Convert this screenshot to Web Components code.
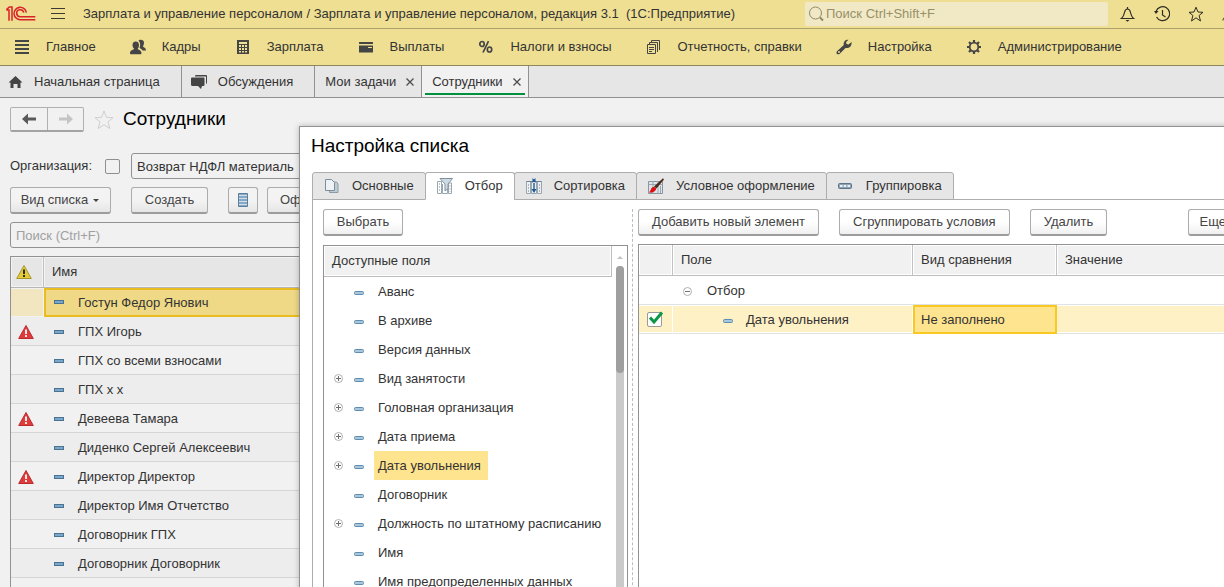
<!DOCTYPE html>
<html lang="ru">
<head>
<meta charset="utf-8">
<meta name="viewport" content="width=device-width, initial-scale=1">
<title>Зарплата и управление персоналом</title>
<style>
html, body { margin: 0; height: 100%; }
body { font: 13px/16px "Liberation Sans", Arial, sans-serif; color: #333; overflow: hidden; }
</style>
</head>
<body>
<hr-app></hr-app>
<script>
const BASE = `*, *::before, *::after { box-sizing: border-box; }
button, input { font: inherit; color: inherit; margin: 0; }
button { cursor: pointer; }
table { border-collapse: separate; border-spacing: 0; table-layout: fixed; width: 100%; }
th, td { padding: 0; text-align: left; font-weight: normal; white-space: nowrap; }`;

function define(name, css, html) {
  const tpl = document.createElement('template');
  tpl.innerHTML = `<style>${BASE}${css}</style>`;
  customElements.define(name, class extends HTMLElement {
    constructor() {
      super();
      const root = this.attachShadow({ mode: 'open' });
      root.append(tpl.content.cloneNode(true));
      const body = document.createElement('template');
      body.innerHTML = typeof html === 'function' ? html(this) : html;
      root.append(body.content);
    }
  });
}

/* name: [width, height, markup] */
const ICONS = {
  logo: [30, 16, `<g transform="scale(.3333)" fill="none" stroke="#d8232a" stroke-width="4.600"><path d="M1 12h8v32M1 11l9-8h8v41"/><path d="M61 20A18.500 18.500 0 1 0 43 41H88M53 20A10.500 10.500 0 1 0 43 32H88"/></g>`],
  menu: [16, 14, `<path d="M1 1.500h14M1 6.500h14M1 11.500h14" stroke="#3c3a33" fill="none"/>`],
  search: [16, 16, `<circle cx="7.500" cy="7" r="6" fill="none" stroke="#8f8968"/><path d="M12 11.500l3 3" stroke="#8f8968" stroke-width="2"/>`],
  bell: [16, 16, `<path d="M7.500 1v2M1.500 12.500C3.500 11 4 9 4.500 6.500 5 4 6 3 7.500 3S10 4 10.500 6.500C11 9 11.500 11 13.500 12.500z" fill="none" stroke="#2f2d25" stroke-width="1.200"/><path d="M5.500 14h4l-2 1.800z" fill="#2f2d25"/>`],
  history: [16, 16, `<path d="M2 5.500A7 7 0 1 1 2.500 11" fill="none" stroke="#2f2d25" stroke-width="1.200"/><path d="M0 5h4.500L2 8z" fill="#2f2d25"/><path d="M8.500 4v5l3 2" fill="none" stroke="#2f2d25" stroke-width="1.200"/>`],
  star: [16, 16, `<path d="M8 1.200l2 4.800 5 .3-3.900 3.200L12.500 15 8 11.800 3.500 15l1.400-5.500L1 6.300 6 6z" fill="none" stroke="#2f2d25"/>`],
  favorite: [20, 20, `<path d="M10 1l2.500 6.300 6.500.4-5 4.200 1.800 6.600L10 14.700l-5.800 3.800L6 11.900 1 7.700l6.500-.4z" fill="none" stroke="#cfcfcf"/>`],
  person: [16, 16, `<path d="M1 14.500c0-3 2-4 6-4M4 4a4 4 0 0 1 8 0c0 4-2 6-4 6s-4-2-4-6z" fill="none" stroke="#2f2d25"/>`],
  lines: [16, 16, `<path d="M1 2h14M1 6h14M1 10h14M1 14h14" stroke="#454545" stroke-width="2"/>`],
  people: [16, 16, `<g fill="#454545"><path d="M8.500 2C9 .3 14 0 14 3.500c0 2-.5 3-1 3.600-.3 1.200 3 1.400 3 4.400h-3.500C12 10 10 9.500 9.500 8.700 10.500 7 10.500 3 8.500 2z"/><path d="M2.500 6C2.500 3.500 4 2.500 5.700 2.500S9 3.500 9 6c0 1.500-.5 2.900-1.200 3.500-.2 1.500 3.700 1.300 3.700 4.500 0 1-.5 1.300-1 1.300H1c-.7 0-1-.4-1-1.300 0-3.200 4.200-3 4-4.500C3 8.900 2.500 7.500 2.500 6z"/></g>`],
  calc: [16, 16, `<path d="M2 1h12v14H2z" fill="#454545"/><path d="M4 3h8v2H4zM4 6h2v2H4zM7 6h2v2H7zM10 6h2v2h-2zM4 9h2v2H4zM7 9h2v2H7zM10 9h2v2h-2zM4 12h2v1.500H4zM7 12h2v1.500H7zM10 12h2v1.500h-2z" fill="#efdf93"/>`],
  card: [16, 16, `<path d="M1.500 3h13q.5 0 .5.500V5H1V3.500Q1 3 1.500 3zM1 6.500h14V13q0 .5-.5.500h-13Q1 13.500 1 13z" fill="#454545"/><path d="M10 8.500h4" stroke="#efdf93"/>`],
  percent: [16, 16, `<g fill="none" stroke="#454545" stroke-width="1.700"><ellipse cx="4" cy="5" rx="2.200" ry="2.500"/><ellipse cx="11.500" cy="10.500" rx="2.200" ry="2.500"/><path d="M10.500 2.200l-5.500 11.300"/></g>`],
  docs: [16, 16, `<path d="M5.500 3V1.500h8V11M3.500 5V3.500h8V13M1.500 5.500h8v9h-8z" fill="none" stroke="#454545"/><path d="M3 8.500h5M3 10.500h5M3 12.500h3" stroke="#454545"/>`],
  wrench: [16, 16, `<path d="M15.500 3l-3 2.500-2-.5-.4-2L12.500.8C9.500 0 7 2.500 7.800 6L1 12.300c-1.500 2 .6 4 2.500 2.600L9.500 9c4 .6 6.500-2 6-6z" fill="#454545"/><circle cx="3" cy="13" r="1" fill="#efdf93"/>`],
  gear: [16, 16, `<circle cx="8" cy="8" r="4.300" fill="none" stroke="#454545" stroke-width="1.800"/><path d="M8 1v3M8 12v3M1 8h3M12 8h3M3 3l2.200 2.200M10.800 10.800L13 13M13 3l-2.200 2.200M5.200 10.800L3 13" stroke="#454545" stroke-width="2.200"/>`],
  home: [16, 16, `<path d="M7.500 2l7 6.500h-2V14H9.500v-4h-4v4H2.500V8.500h-2z" fill="#454545"/>`],
  chat: [18, 16, `<path d="M5 2.500V2q0-1 1-1h10q1 0 1 1v6q0 2-1 2V2.500z" fill="#454545"/><path d="M2 3.500h11.500q1 0 1 1v6q0 1.500-1 1.500H12l-1 3-3-3H2.500q-1.500 0-1.500-1.500v-6q0-1 1-1z" fill="#454545"/>`],
  close: [10, 10, `<path d="M1.500 1.500l7 7M8.500 1.500l-7 7" stroke="#4d4d4d" stroke-width="1.300"/>`],
  back: [16, 12, `<path d="M1 6l6-5.500v4h8v3H7v4z" fill="#595959"/>`],
  forward: [16, 12, `<path d="M15 6L9 .5v4H1v3h8v4z" fill="#c4c4c4"/>`],
  caret: [8, 6, `<path d="M1 2h6L4 5z" fill="#444"/>`],
  list: [12, 16, `<path d="M1.500 1.500h9v13h-9z" fill="#86a8c2" stroke="#5d7f9b"/><path d="M2 3.500h8M2 6.500h8M2 9.500h8M2 12.500h8" stroke="#cfe0ee"/>`],
  dash: [10, 6, `<rect x=".5" y=".5" width="9" height="3" fill="#78a7cb" stroke="#4b7390"/>`],
  field: [10, 6, `<rect x=".5" y="1.500" width="9" height="3" rx="1" fill="#a6c7dc" stroke="#5f8bad"/>`],
  warn: [16, 16, `<path d="M8 1.500L15.300 14.500H.7z" fill="#e2cb37" stroke="#a8962d" stroke-linejoin="round"/><path d="M7 5.500h2v4.500H7zM7 11h2v2H7z" fill="#2f2b12"/>`],
  error: [16, 16, `<path d="M8 1.500L15.300 14.500H.7z" fill="#e03a3a" stroke="#b92b2f" stroke-linejoin="round"/><path d="M7 5.500h2v4.500H7zM7 11h2v2H7z" fill="#f7e9e9"/>`],
  plus: [9, 9, `<circle cx="4.500" cy="4.500" r="4" fill="#fff" stroke="#b0b0b0"/><path d="M2 4.500h5M4.500 2v5" stroke="#6d6d6d"/>`],
  minus: [9, 9, `<circle cx="4.500" cy="4.500" r="4" fill="#fff" stroke="#b0b0b0"/><path d="M2 4.500h5" stroke="#777"/>`],
  tabPages: [16, 16, `<path d="M5.500 4h7l1.500 2v8.500H5.500z" fill="#bfcbd3" stroke="#8b9aa6"/><path d="M1.500 1.500h6l3 3v8h-9z" fill="#eef2f5" stroke="#7d8d9a"/>`],
  tabFilter: [16, 16, `<path d="M.5 3.500h4v12h-4zM5.500 6v9.500h5V6M11.500 5h3v10.500h-3z" fill="#fff" stroke="#9aa7b1"/><path d="M2.500 5v9M13 7v7" stroke="#b9c4cc" stroke-dasharray="2 1"/><path d="M3 .5h12.500L11 6v4.500l-3 2.500V6z" fill="#cfdbe4" stroke="#7f919f"/>`],
  tabSort: [16, 16, `<path d="M.5 3.500h4v12h-4zM5.500 3.500h5v12h-5zM11.500 3.500h4v12h-4z" fill="#eef1f4" stroke="#98a6b1"/><path d="M.5 3.500h15" stroke="#6f8190"/><path d="M2.500 6v9M13.500 6v9" stroke="#a9b6c0" stroke-dasharray="2 1"/><path d="M8 5v8" stroke="#1e5793" stroke-width="1.400"/><path d="M5.500 11h5L8 15zM6.500 0l1.500 1.500L9.500 0v5L8 3.500 6.500 5z" fill="#1e5793"/>`],
  tabFormat: [16, 16, `<path d="M.5 3.500h14v12H.5z" fill="#dfe4e8" stroke="#8796a2"/><path d="M.5 6.500h14M5 3.500v12M10 3.500v12M12.500 8v7" stroke="#9aa7b1"/><path d="M6 8.500L15 .3 16 1.500 8.500 10.500z" fill="#4a2c1d"/><path d="M5.500 9c2 0 3 1 2.500 2.500C7 14 4 15 1 14.500 3 13 2.500 9.500 5.500 9z" fill="#df0d14"/>`],
  tabGroup: [16, 8, `<rect x=".5" y="1.500" width="13" height="5" rx="1" fill="#8ea2b2" stroke="#5c7488"/><path d="M2 4h2.500M5.700 4h2.500M9.500 4H12" stroke="#eaf1f6" stroke-width="2"/>`],
  up: [8, 6, `<path d="M1 5h6L4 2z" fill="#c2c2c2"/>`],
  check: [16, 14, `<path d="M2 6.500L6 11 14 1.500" fill="none" stroke="#0c9648" stroke-width="3"/>`]
};

define('ui-icon', `:host { display: inline-flex; flex: none; } svg { display: block; }`, el => {
  const [w, h, body] = ICONS[el.getAttribute('name')];
  return `<svg width="${w}" height="${h}" viewBox="0 0 ${w} ${h}" aria-hidden="true">${body}</svg>`;
});

define('ui-button', `
:host { display: inline-block; flex: none; }
button { display: flex; align-items: center; justify-content: center; gap: 4px; width: 100%; height: 27px; padding: 0 var(--button-pad, 13px); border: 1px solid #acacac; border-bottom: 2px solid #9c9c9c; border-radius: 3px; background: var(--button-face, linear-gradient(#fff 50%, #f0f0f0)); color: #444; white-space: nowrap; }`,
`<button type="button"><slot></slot></button>`);

define('title-bar', `
:host { display: flex; align-items: center; height: 29px; padding-left: 6px; background: #efdf93; border-bottom: 1px solid #aca06b; overflow: hidden; }
.menu { display: flex; border: 0; padding: 0; background: none; margin: 0 17px 0 14px; }
.name { white-space: pre; }
.tools { display: flex; align-items: center; margin: 0 -14px 0 auto; gap: 18px; }
.search { display: flex; align-items: center; gap: 2px; width: 303px; height: 24px; padding: 0 3px; background: #f1e9c6; border-radius: 2px; margin-right: -6px; }
.search input { flex: 1; min-width: 0; border: 0; padding: 0; background: none; outline: 0; }
.search input::placeholder { color: #979068; opacity: 1; }
.tools button { display: flex; border: 0; padding: 0; background: none; }`,
`<ui-icon name="logo"></ui-icon>
<button class="menu" aria-label="Меню"><ui-icon name="menu"></ui-icon></button>
<span class="name">Зарплата и управление персоналом / Зарплата и управление персоналом, редакция 3.1  (1С:Предприятие)</span>
<div class="tools">
<label class="search"><ui-icon name="search"></ui-icon><input type="text" placeholder="Поиск Ctrl+Shift+F"></label>
<button aria-label="Оповещения"><ui-icon name="bell"></ui-icon></button>
<button aria-label="История"><ui-icon name="history"></ui-icon></button>
<button aria-label="Избранное"><ui-icon name="star"></ui-icon></button>
<button aria-label="Пользователь"><ui-icon name="person"></ui-icon></button>
</div>`);

define('nav-item', `
:host { display: block; flex: none; }
a { display: flex; align-items: center; gap: 16px; color: inherit; text-decoration: none; white-space: nowrap; }`,
el => `<a href="#"><ui-icon name="${el.getAttribute('icon')}"></ui-icon><slot></slot></a>`);

define('section-nav', `
:host { display: block; background: #efdf93; border-bottom: 1px solid #8f875c; }
nav { display: flex; align-items: center; gap: 34px; height: 36px; padding-left: 14px; }`,
`<nav>
<nav-item icon="lines">Главное</nav-item><nav-item icon="people">Кадры</nav-item><nav-item icon="calc">Зарплата</nav-item><nav-item icon="card">Выплаты</nav-item><nav-item icon="percent">Налоги и взносы</nav-item><nav-item icon="docs">Отчетность, справки</nav-item><nav-item icon="wrench">Настройка</nav-item><nav-item icon="gear">Администрирование</nav-item>
</nav>`);

define('window-tab', `
:host { display: flex; align-items: center; flex: none; height: 31px; padding: 0 8px; border-right: 1px solid #919191; position: relative; }
:host([icon]) { padding-right: 21px; }
:host([closable]) { padding-left: 10px; padding-right: 6px; }
:host([active]) { background: #f1f1f1; }
:host([active])::after { content: ""; position: absolute; left: 3px; right: 3px; bottom: 2px; height: 2px; background: #00913f; }
a { display: flex; align-items: center; gap: 10px; color: inherit; text-decoration: none; white-space: nowrap; }
button { display: flex; border: 0; background: none; padding: 0; margin-left: 9px; }`,
el => `<a href="#">${el.hasAttribute('icon') ? `<ui-icon name="${el.getAttribute('icon')}"></ui-icon>` : ''}<slot></slot></a>${el.hasAttribute('closable') ? '<button aria-label="Закрыть"><ui-icon name="close"></ui-icon></button>' : ''}`);

define('window-tabs', `:host { display: flex; background: #e6e6e6; border-bottom: 1px solid #919191; }`,
`<window-tab icon="home">Начальная страница</window-tab><window-tab icon="chat">Обсуждения</window-tab><window-tab closable>Мои задачи</window-tab><window-tab closable active>Сотрудники</window-tab>`);

const PEOPLE = [['Гостун Федор Янович'], ['ГПХ Игорь', 1], ['ГПХ со всеми взносами'], ['ГПХ х х'], ['Девеева Тамара', 1], ['Диденко Сергей Алексеевич'], ['Директор Директор', 1], ['Директор Имя Отчетство'], ['Договорник ГПХ'], ['Договорник Договорник']];

define('employee-table', `
:host { display: block; border: 1px solid #919191; border-width: 1px 0 0 1px; overflow: hidden; }
.flag { width: 33px; }
th { height: 31px; background: #e6e6e6; border-right: 1px solid #c2c2c2; border-bottom: 1px solid #b5b5b5; box-shadow: inset 0 0 0 1px #f3f3f3; padding-left: 8px; }
th:first-child { padding-left: 5px; }
th ui-icon, td ui-icon { vertical-align: middle; }
td { height: 29px; border-bottom: 1px solid #d5d5d5; padding-top: 2px; }
td:first-child { padding-left: 7px; }
td:last-child { padding-left: 10px; }
td:last-child ui-icon { margin-right: 14px; }
tr:nth-child(even) td { background: #ededed; }
tr.current td { padding-top: 0; }
tr.current td:first-child { background: #f1e6bf; border: 1px solid #f1f1f1; border-left: 0; }
tr.current td:last-child { background: #efd986; border: 2px solid #e9bd20; padding-left: 8px; }`,
`<table><colgroup><col class="flag"><col></colgroup>
<thead><tr><th aria-label="Предупреждение"><ui-icon name="warn"></ui-icon></th><th>Имя</th></tr></thead>
<tbody>${PEOPLE.map(([n, e], i) => `<tr${i ? '' : ' class="current"'}><td>${e ? '<ui-icon name="error"></ui-icon>' : ''}</td><td><ui-icon name="dash"></ui-icon>${n}</td></tr>`).join('')}</tbody></table>`);

define('employee-page', `
:host { display: flex; flex-direction: column; height: 100%; padding: 9px 0 0 10px; --button-face: linear-gradient(#f3f3f3 50%, #e6e6e6); --button-pad: 12px; }
.head, .org, .bar { display: flex; align-items: center; }
.head { height: 25px; gap: 10px; }
.history { display: flex; height: 25px; border: 1px solid #b0b0b0; border-bottom: 2px solid #a3a3a3; border-radius: 2px; }
.history button { display: flex; align-items: center; justify-content: center; width: 36px; padding: 0; border: 0; background: none; }
.history button + button { border-left: 1px solid #b0b0b0; }
.fav { display: flex; border: 0; background: none; padding: 0; }
h1 { margin: 0 0 2px -1px; font-size: 19px; line-height: 24px; font-weight: normal; color: #000; }
.org { margin-top: 21px; }
.org label { width: 95px; }
.org input[type=checkbox] { appearance: none; width: 15px; height: 15px; border: 1px solid #8f8f8f; border-radius: 2px; margin-right: 11px; }
input[type=text], input[type=search] { height: 26px; border: 1px solid #919191; border-radius: 3px; background: #f1f1f1; padding: 0 5px; outline: 0; }
.org input[type=text] { flex: 1; }
.bar { margin-top: 8px; gap: 9px; }
.bar .view, .bar .create { margin-right: 11px; }
.view { width: 101px; } .create { width: 77px; } .rows { width: 30px; }
.find { width: 100%; margin-top: 8px; }
.find::placeholder { color: #a0a0a0; opacity: 1; }
employee-table { flex: 1; min-height: 0; margin-top: 8px; }`,
`<div class="head"><div class="history"><button aria-label="Назад"><ui-icon name="back"></ui-icon></button><button aria-label="Вперед"><ui-icon name="forward"></ui-icon></button></div>
<button class="fav" aria-label="В избранное"><ui-icon name="favorite"></ui-icon></button><h1>Сотрудники</h1></div>
<div class="org"><label for="org-on">Организация:</label><input id="org-on" type="checkbox"><input type="text" aria-label="Организация" value="Возврат НДФЛ материаль"></div>
<div class="bar"><ui-button class="view">Вид списка <ui-icon name="caret"></ui-icon></ui-button><ui-button class="create">Создать</ui-button><ui-button class="rows"><ui-icon name="list"></ui-icon></ui-button><ui-button>Оф</ui-button></div>
<input class="find" type="search" aria-label="Поиск" placeholder="Поиск (Ctrl+F)">
<employee-table></employee-table>`);

define('form-tab', `
:host { display: block; flex: none; margin-left: -1px; }
button { display: flex; align-items: center; gap: 12px; height: 28px; padding: 0 11px; border: 1px solid #adadad; border-radius: 3px 3px 0 0; background: #e6e6e6; color: #333; white-space: nowrap; }
:host([active]) button { background: #fff; border-bottom-color: #fff; }`,
el => `<button type="button" role="tab"><ui-icon name="${el.getAttribute('icon')}"></ui-icon><slot></slot></button>`);

const FIELDS = [['Аванс'], ['В архиве'], ['Версия данных'], ['Вид занятости', 1], ['Головная организация', 1], ['Дата приема', 1], ['Дата увольнения', 1, 1], ['Договорник'], ['Должность по штатному расписанию', 1], ['Имя'], ['Имя предопределенных данных']];

define('field-tree', `
:host { display: flex; min-height: 0; border: 1px solid #919191; overflow: hidden; }
.main { flex: 1; min-width: 0; }
.head { height: 31px; padding: 7px 8px; background: #f1f1f1; border-right: 1px solid #bdbdbd; border-bottom: 1px solid #bdbdbd; box-shadow: inset 0 0 0 1px #fff; }
ul { list-style: none; margin: 0; padding: 0; }
li { display: flex; align-items: center; height: 29px; white-space: nowrap; padding-left: 10px; }
.toggle { display: flex; width: 20px; border: 0; padding: 0; background: none; }
li > ui-icon { padding-top: 2px; margin-right: 10px; }
li > span:last-child { padding: 7px 7px 6px 4px; }
.selected { background: #ffe48f; }
.scroll { width: 15px; flex: none; display: flex; flex-direction: column; align-items: center; gap: 6px; padding-top: 8px; }
.track { flex: 1; width: 8px; background: #cacaca; border-radius: 4px 4px 0 0; }
.thumb { height: 107px; background: #9f9f9f; border-radius: 4px; }`,
`<div class="main"><div class="head">Доступные поля</div><ul>${FIELDS.map(([n, p, s]) => `<li>${p ? '<button class="toggle" aria-label="Развернуть"><ui-icon name="plus"></ui-icon></button>' : '<span class="toggle"></span>'}<ui-icon name="field"></ui-icon><span${s ? ' class="selected"' : ''}>${n}</span></li>`).join('')}</ul></div>
<div class="scroll"><ui-icon name="up"></ui-icon><div class="track"><div class="thumb"></div></div></div>`);

define('filter-table', `
:host { display: block; border: 1px solid #919191; border-right: 0; overflow: hidden; }
.c1 { width: 34px; } .c2 { width: 240px; } .c3 { width: 144px; }
th { height: 31px; padding-left: 8px; background: #f1f1f1; border-right: 1px solid #c2c2c2; border-bottom: 1px solid #bdbdbd; box-shadow: inset 0 0 0 1px #fff; }
td { height: 29px; border-bottom: 1px solid #e2e2e2; padding: 2px 0 0 8px; }
td ui-icon { vertical-align: middle; }
.group { padding-left: 10px; }
.group ui-icon { margin-right: 15px; }
.leaf ui-icon { margin: 0 13px 0 42px; }
.picked td { background: #fff1c6; border-right: 1px solid #fff; box-shadow: inset 0 1px #fff, inset 0 -1px #fff; }
.picked td.cell { background: #ffe48f; border: 2px solid #f9c922; padding: 0 0 0 6px; box-shadow: none; }
.box { position: relative; display: block; width: 16px; height: 16px; }
.box input { appearance: none; display: block; width: 15px; height: 15px; border: 1px solid #9a9a9a; border-radius: 2px; background: #fff; }
.box ui-icon { position: absolute; left: 1px; top: -1px; pointer-events: none; }`,
`<table><colgroup><col class="c1"><col class="c2"><col class="c3"><col></colgroup>
<thead><tr><th></th><th>Поле</th><th>Вид сравнения</th><th>Значение</th></tr></thead>
<tbody><tr><td></td><td class="group" colspan="3"><ui-icon name="minus"></ui-icon>Отбор</td></tr>
<tr class="picked"><td><label class="box"><input type="checkbox" checked aria-label="Использовать"><ui-icon name="check"></ui-icon></label></td><td class="leaf"><ui-icon name="field"></ui-icon>Дата увольнения</td><td class="cell">Не заполнено</td><td></td></tr></tbody></table>`);

define('list-settings', `
:host { display: flex; flex-direction: column; background: #fff; border: 1px solid #919191; padding: 7px 0 0 12px; box-shadow: 0 0 6px rgba(0,0,0,.25); }
h2 { margin: 0 0 0 -1px; font-size: 19px; line-height: 24px; font-weight: normal; color: #000; }
.tabs { display: flex; margin: 14px 0 -1px 1px; position: relative; }
.panel { flex: 1; min-height: 0; display: flex; gap: 4px; padding: 9px 12px 0 10px; border: 1px solid #adadad; }
.fields, .filters { display: flex; flex-direction: column; min-height: 0; }
.fields { width: 305px; flex: none; gap: 9px; }
.filters { flex: 1; min-width: 0; gap: 8px; border-left: 1px dashed #bdbdbd; padding-left: 5px; }
.choose { width: 80px; }
.bar { display: flex; gap: 20px; }
.last { margin-left: auto; --button-pad: 11px; }
field-tree, filter-table { flex: 1; }`,
`<h2>Настройка списка</h2>
<div class="tabs" role="tablist"><form-tab icon="tabPages">Основные</form-tab><form-tab icon="tabFilter" active>Отбор</form-tab><form-tab icon="tabSort">Сортировка</form-tab><form-tab icon="tabFormat">Условное оформление</form-tab><form-tab icon="tabGroup">Группировка</form-tab></div>
<div class="panel"><section class="fields"><ui-button class="choose">Выбрать</ui-button><field-tree></field-tree></section>
<section class="filters"><div class="bar"><ui-button>Добавить новый элемент</ui-button><ui-button>Сгруппировать условия</ui-button><ui-button>Удалить</ui-button><ui-button class="last">Еще <ui-icon name="caret"></ui-icon></ui-button></div><filter-table></filter-table></section></div>`);

define('hr-app', `
:host { display: flex; flex-direction: column; height: 100vh; overflow: hidden; background: #f1f1f1; }
title-bar, section-nav, window-tabs { flex: none; }
main { position: relative; flex: 1; min-height: 0; overflow: hidden; }
list-settings { position: absolute; left: 299px; top: 28px; right: -40px; bottom: -40px; }`,
`<title-bar></title-bar><section-nav></section-nav><window-tabs></window-tabs>
<main><employee-page></employee-page><list-settings></list-settings></main>`);
</script>
</body>
</html>
